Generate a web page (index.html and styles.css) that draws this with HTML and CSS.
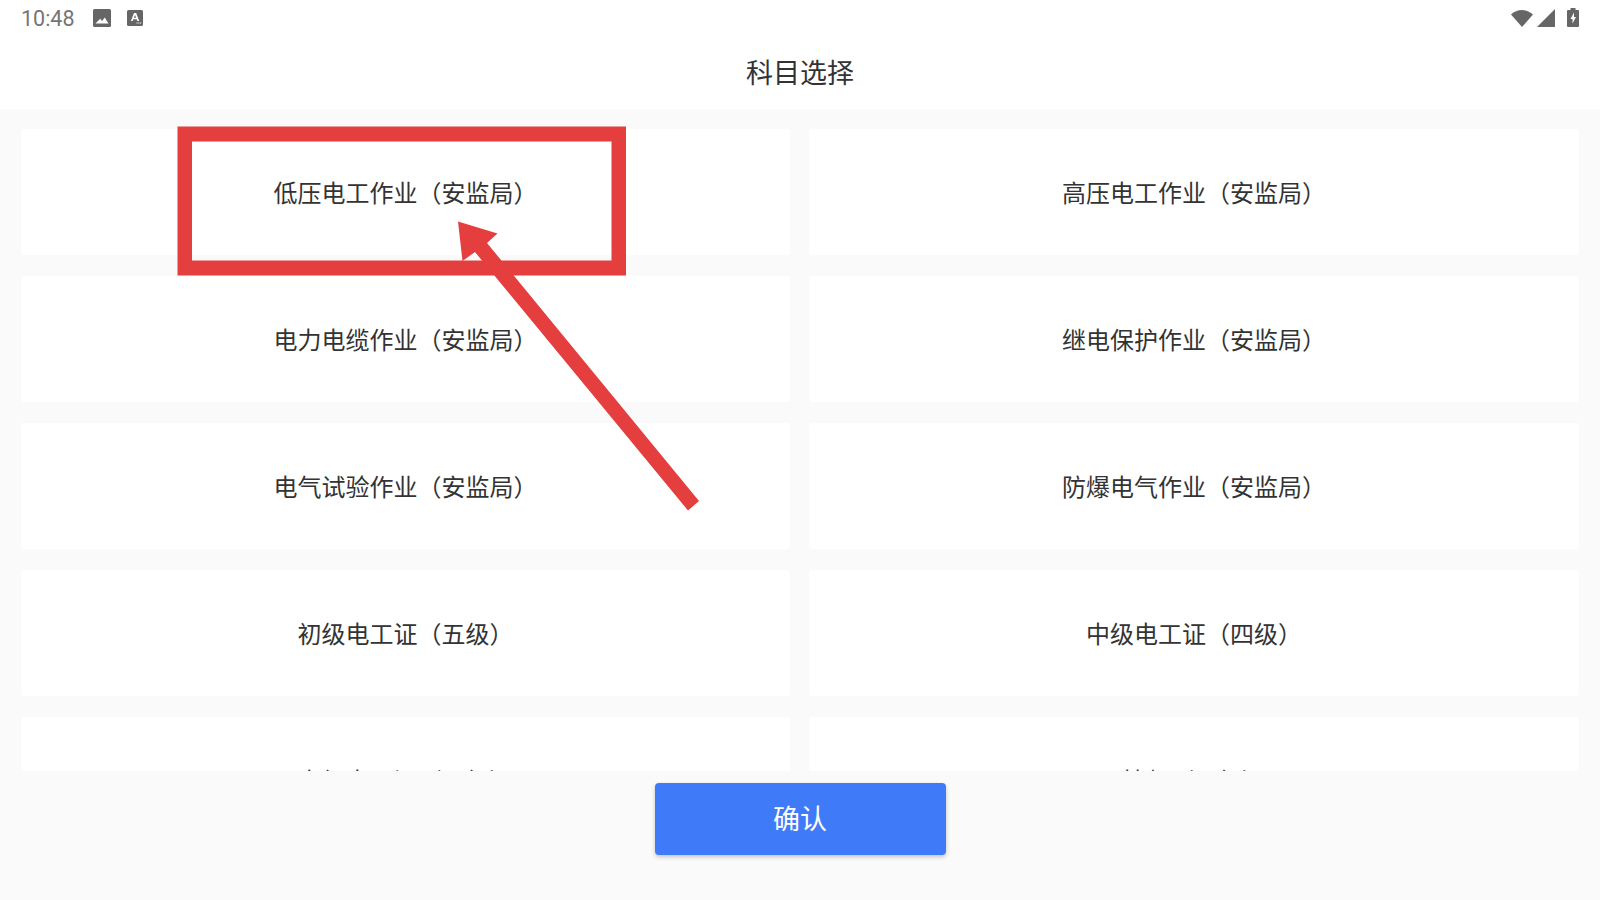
FILE: index.html
```html
<!DOCTYPE html>
<html lang="zh-CN">
<head>
<meta charset="utf-8">
<title>科目选择</title>
<link rel="stylesheet" href="styles.css">
</head>
<body>
<div class="app">
  <header class="top">
    <div class="status">
      <div class="status-left">
        <span class="time">10:48</span>
        <svg class="ic-image" viewBox="0 0 18 18"><path fill="#666" fill-rule="evenodd" d="M1.500 0h15A1.500 1.500 0 0 1 18 1.500v15a1.500 1.500 0 0 1-1.500 1.500h-15A1.500 1.500 0 0 1 0 16.500v-15A1.500 1.500 0 0 1 1.500 0zM2.500 14.500h13l-3.800-6-2.600 3.600-1.900-2.300z"/></svg>
        <svg class="ic-note" viewBox="0 0 16 16"><path fill="#666" d="M1.500 0h13A1.500 1.500 0 0 1 16 1.500v13a1.500 1.500 0 0 1-1.500 1.500h-13A1.500 1.500 0 0 1 0 14.500v-13A1.500 1.500 0 0 1 1.500 0z"/><path fill="#fff" d="M7 3h2.200l3 8h-1.900l-.6-1.700H6.300L5.700 11H3.900zM6.900 7.800h2.200L8 4.900z"/><path fill="#fff" d="M9.500 12.400h1.100v1.100H9.500zM11.300 12.400h1.100v1.100h-1.100zM13.100 12.400h1.100v1.100h-1.100z"/></svg>
      </div>
      <div class="status-right">
        <svg class="ic-wifi" viewBox="0 0 22 17"><path fill="#666" d="M0 4.500C3 1.700 6.800 0 11 0s8 1.700 11 4.500L11 17z"/></svg>
        <svg class="ic-signal" viewBox="0 0 18 18"><path fill="#666" d="M18 0v18H0z"/></svg>
        <svg class="ic-battery" viewBox="0 0 12 19"><path fill="#666" d="M3.500 0h5v2H11a1 1 0 0 1 1 1v15a1 1 0 0 1-1 1H1a1 1 0 0 1-1-1V3a1 1 0 0 1 1-1h2.500z"/><path fill="#fff" d="M7 4.500 3.500 11H5.500v4.500L9 9H7z"/></svg>
      </div>
    </div>
    <h1 class="title">科目选择</h1>
  </header>
  <main class="list">
    <div class="grid">
      <div class="card">低压电工作业（安监局）</div>
      <div class="card">高压电工作业（安监局）</div>
      <div class="card">电力电缆作业（安监局）</div>
      <div class="card">继电保护作业（安监局）</div>
      <div class="card">电气试验作业（安监局）</div>
      <div class="card">防爆电气作业（安监局）</div>
      <div class="card">初级电工证（五级）</div>
      <div class="card">中级电工证（四级）</div>
      <div class="card">高级电工证（三级）</div>
      <div class="card">技师（二级）</div>
    </div>
  </main>
  <footer class="actions">
    <button class="confirm" type="button">确认</button>
  </footer>
  <svg class="annotation" viewBox="0 0 1600 900" aria-hidden="true">
    <path fill="#e53e3f" fill-rule="evenodd" d="M177.500 126.500H626V275.500H177.500zM192 141.500V260.500H611.500V141.500z"/>
    <path fill="#e53e3f" d="M458 221.500 497.500 233.500 487 243 699 501 688 510.500 475 252 462.500 261z"/>
  </svg>
</div>
</body>
</html>
```
FILE: styles.css
```css
* { box-sizing: border-box; }
html, body { margin: 0; height: 100%; }
body {
  font-family: Roboto, "Noto Sans CJK SC", sans-serif;
  background: #fafafa;
  color: #333;
  overflow: hidden;
}
.app {
  position: relative;
  width: 1600px;
  height: 900px;
  display: flex;
  flex-direction: column;
  background: #fafafa;
}
.top {
  height: 109px;
  flex: none;
  background: #fff;
  display: flex;
  flex-direction: column;
}
.status {
  height: 36px;
  flex: none;
  display: flex;
  justify-content: space-between;
  align-items: center;
  padding: 0 21px;
}
.status-left, .status-right { display: flex; align-items: center; }
.time { font-size: 21.500px; color: #757575; line-height: 37px; width: 72px; }
.ic-image { width: 18px; height: 18px; margin-right: 16px; }
.ic-note { width: 16px; height: 16px; }
.ic-wifi { width: 22px; height: 17px; margin-right: 4px; }
.ic-signal { width: 18px; height: 18px; margin-right: 12px; }
.ic-battery { width: 12px; height: 19px; margin-bottom: 2px; }
.title {
  margin: 0;
  flex: 1;
  display: flex;
  align-items: center;
  justify-content: center;
  font-size: 27px;
  font-weight: 400;
  color: #333;
  padding-bottom: 2px;
}
.list {
  height: 662px;
  flex: none;
  overflow: hidden;
  padding: 20px 21px 0;
}
.grid {
  display: grid;
  grid-template-columns: 769px 770px;
  grid-auto-rows: 126px;
  column-gap: 19px;
  row-gap: 21px;
}
.card {
  background: #fff;
  border-radius: 3px;
  display: flex;
  align-items: center;
  justify-content: center;
  font-size: 24px;
  color: #333;
  padding-bottom: 2px;
}
.actions {
  flex: 1;
  display: flex;
  justify-content: center;
  align-items: flex-start;
  padding-top: 12px;
}
.confirm {
  width: 291px;
  height: 72px;
  border: 0;
  border-radius: 4px;
  background: #3f7bf8;
  color: #fff;
  font-family: inherit;
  font-size: 27px;
  padding: 0 0 4px;
  box-shadow: 0 2px 4px rgba(0, 0, 0, 0.22);
}
.annotation {
  position: absolute;
  left: 0;
  top: 0;
  width: 1600px;
  height: 900px;
  pointer-events: none;
}
```
